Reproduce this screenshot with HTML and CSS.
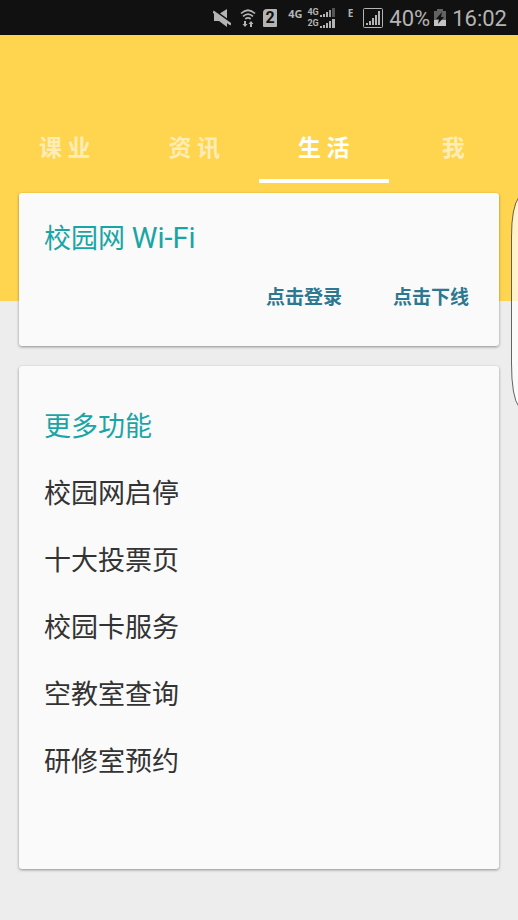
FILE: index.html
```html
<!DOCTYPE html>
<html lang="zh-CN">
<head>
<meta charset="utf-8">
<meta name="viewport" content="width=device-width, initial-scale=1">
<title>生活</title>
<link rel="stylesheet" href="styles.css">
</head>
<body>
<div class="status">
  <svg class="mute" width="18" height="18" viewBox="0 0 18 18" aria-hidden="true">
    <path d="M1 5h5l8-5v18L6 12H1z" fill="#b4b4b4"/>
    <path d="M0 .5l18 13" stroke="#111" stroke-width="2"/>
    <path d="M0 2.500l18 13" stroke="#b4b4b4" stroke-width="2.400"/>
  </svg>
  <svg class="wifi" width="16" height="18" viewBox="0 0 16 18" aria-hidden="true">
    <g fill="none" stroke="#b4b4b4" stroke-width="1.7">
      <path d="M1 4.5Q8-2 15 4.5M3 7.300q5-4.500 10 0M5.300 10q2.700-2.300 5.400 0"/>
    </g>
    <path d="M4 12h2v3h1.500L5 18l-2.500-3H4zM10 18h2v-3h1.500L11 12l-2.500 3H10z" fill="#b4b4b4"/>
  </svg>
  <span class="sim">2</span>
  <span class="net">4G</span>
  <span class="dual">
    <span class="dual-row">4G<svg width="15" height="9" viewBox="0 0 15 9" aria-hidden="true"><path d="M0 7h2v2H0zM3 6h2v3H3zM6 4h2v5H6z" fill="#b4b4b4"/><path d="M9 2h2v7H9z" fill="#999"/><path d="M12 0h3v9h-3z" fill="#555"/></svg></span>
    <span class="dual-row">2G<svg width="15" height="9" viewBox="0 0 15 9" aria-hidden="true"><path d="M0 7h2v2H0zM3 6h2v3H3zM6 4h2v5H6zM9 2h2v7H9zM12 0h3v9h-3z" fill="#b4b4b4"/></svg></span>
  </span>
  <span class="edge">E</span>
  <svg class="signal" width="20" height="20" viewBox="0 0 20 20" aria-hidden="true">
    <rect x=".5" y=".5" width="19" height="19" rx="1" fill="none" stroke="#b4b4b4"/>
    <path d="M3 15h2v2H3zM6 13h2v4H6zM9 10h2v7H9zM12 7h2v10h-2zM15 3h2v14h-2z" fill="#b4b4b4"/>
  </svg>
  <span class="percent">40%</span>
  <svg class="battery" width="12" height="17" viewBox="0 0 12 17" aria-hidden="true">
    <path d="M3 0h6v2h3v15H0V2h3z" fill="#626262"/>
    <path d="M0 11h12v6H0z" fill="#c4c4c4"/>
    <path d="M8 3L2 10h3l-1 5 6-7H7z" fill="#111"/>
  </svg>
  <time class="clock">16:02</time>
</div>
<header class="hero">
  <nav class="tabs">
    <a class="tab" href="#study">课 业</a>
    <a class="tab" href="#news">资 讯</a>
    <a class="tab active" href="#life" aria-current="page">生 活</a>
    <a class="tab" href="#me">我</a>
  </nav>
</header>
<main class="cards">
  <section class="card">
    <h2 class="title">校园网 <span class="latin">Wi-Fi</span></h2>
    <div class="actions">
      <button class="action" type="button">点击登录</button>
      <button class="action" type="button">点击下线</button>
    </div>
  </section>
  <section class="card more">
    <h2 class="title">更多功能</h2>
    <ul class="list">
      <li><a href="#network">校园网启停</a></li>
      <li><a href="#vote">十大投票页</a></li>
      <li><a href="#card">校园卡服务</a></li>
      <li><a href="#rooms">空教室查询</a></li>
      <li><a href="#study-room">研修室预约</a></li>
    </ul>
  </section>
</main>
<svg class="drawer" width="7" height="218" viewBox="0 0 7 218" aria-hidden="true">
  <path d="M8 4Q.5 14 .5 44v126Q.5 204 8 214" fill="#fff" fill-opacity=".72" stroke="#333" stroke-opacity=".75"/>
</svg>
</body>
</html>
```
FILE: styles.css
```css
* {
  box-sizing: border-box;
}

body {
  position: relative;
  margin: 0;
  min-height: 100vh;
  background: #ededed;
  color: #333;
  font-family: Roboto, "Noto Sans CJK SC", sans-serif;
}

a {
  color: inherit;
  text-decoration: none;
}

.status {
  display: flex;
  align-items: center;
  justify-content: flex-end;
  height: 35px;
  padding-right: 11px;
  background: #111;
  color: #b4b4b4;
}

.status svg {
  flex: none;
}

.wifi {
  margin-left: 9px;
}

.sim {
  width: 14px;
  height: 18px;
  margin-left: 7px;
  border-radius: 4px 1px 1px 1px;
  background: #b4b4b4;
  color: #111;
  font-size: 16px;
  font-weight: 700;
  line-height: 18px;
  text-align: center;
}

.net,
.edge {
  height: 22px;
  font-family: "Noto Sans", sans-serif;
  font-size: 11px;
  font-weight: 700;
  line-height: 13px;
}

.net {
  margin-left: 11px;
}

.dual {
  display: grid;
  margin-left: 5px;
  font-family: Roboto, sans-serif;
  font-size: 9px;
  font-weight: 700;
  line-height: 11px;
}

.dual-row {
  display: flex;
  align-items: center;
  gap: 1px;
}

.edge {
  margin-left: 13px;
  font-size: 10px;
}

.signal {
  margin-left: 10px;
}

.percent,
.clock {
  margin-left: 6px;
  padding-top: 2px;
  font-size: 22px;
  line-height: 26px;
}

.battery {
  margin-left: 4px;
}

.hero {
  height: 266px;
  padding-top: 76px;
  background: #ffd54f;
}

.tabs {
  display: grid;
  grid-template-columns: repeat(4, 1fr);
}

.tab {
  height: 72px;
  padding-top: 22px;
  border-bottom: 4px solid transparent;
  color: rgba(255, 255, 255, 0.6);
  font-size: 23px;
  font-weight: 700;
  line-height: 32px;
  text-align: center;
}

.tab.active {
  border-color: #fff;
  color: #fff;
}

.cards {
  position: relative;
  display: grid;
  gap: 20px;
  margin: -108px 19px 0;
  padding-bottom: 50px;
}

.card {
  padding: 26px 25px 28px;
  border-radius: 3px;
  background: #fafafa;
  box-shadow: 0 1px 3px rgba(0, 0, 0, 0.4);
}

.more {
  padding: 41px 25px 87px;
}

.title {
  margin: 0;
  color: #19a5a5;
  font-size: 27px;
  font-weight: 400;
  line-height: 40px;
}

.latin {
  font-size: 29px;
  line-height: 1;
}

.actions {
  display: flex;
  justify-content: flex-end;
  gap: 51px;
  margin-top: 19px;
  padding-right: 5px;
}

.action {
  padding: 0;
  border: 0;
  background: none;
  color: #2b7890;
  font-family: inherit;
  font-size: 19px;
  font-weight: 700;
  line-height: 40px;
}

.list {
  display: grid;
  gap: 27px;
  margin: 27px 0 0;
  padding: 0;
  list-style: none;
  font-size: 27px;
  line-height: 40px;
}

.drawer {
  position: absolute;
  top: 193px;
  right: 0;
}
```
